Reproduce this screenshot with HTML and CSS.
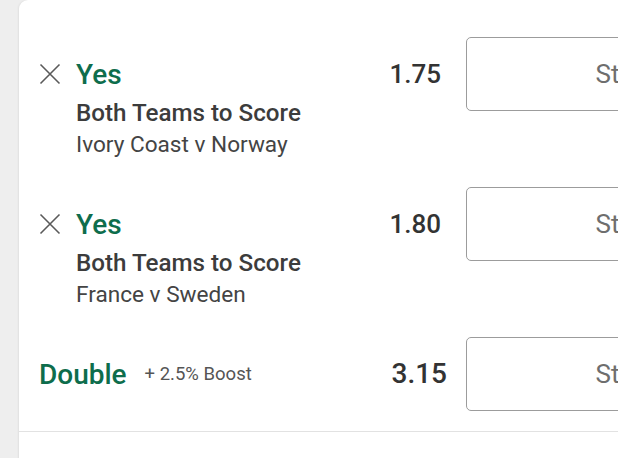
FILE: index.html
```html
<!DOCTYPE html>
<html lang="en">
<head>
  <meta charset="UTF-8" />
  <meta name="viewport" content="width=device-width, initial-scale=1.0"/>
  <title>Bet Slip</title>
  <link rel="stylesheet" href="styles.css">
</head>

<body>
  <div class="slip">
    <div class="leg">
      <div class="selection">
        <div class="selection-head">
          <button class="remove" aria-label="Remove">
            <svg width="22" height="22" viewBox="0 0 22 22"><path d="M1.5 1.5 L20.5 20.5 M20.5 1.5 L1.5 20.5" stroke="#5a5a5a" stroke-width="1.6" fill="none"/></svg>
          </button>
          <span class="pick">Yes</span>
        </div>
        <div class="market">Both Teams to Score</div>
        <div class="event">Ivory Coast v Norway</div>
      </div>
      <div class="odds">1.75</div>
      <input class="stake" type="text" placeholder="Stake">
    </div>

    <div class="leg">
      <div class="selection">
        <div class="selection-head">
          <button class="remove" aria-label="Remove">
            <svg width="22" height="22" viewBox="0 0 22 22"><path d="M1.5 1.5 L20.5 20.5 M20.5 1.5 L1.5 20.5" stroke="#5a5a5a" stroke-width="1.6" fill="none"/></svg>
          </button>
          <span class="pick">Yes</span>
        </div>
        <div class="market">Both Teams to Score</div>
        <div class="event">France v Sweden</div>
      </div>
      <div class="odds">1.80</div>
      <input class="stake" type="text" placeholder="Stake">
    </div>

    <div class="multiple">
      <div class="multiple-name">
        <span class="pick">Double</span>
        <span class="boost">+ 2.5% Boost</span>
      </div>
      <div class="odds odds-multiple">3.15</div>
      <input class="stake" type="text" placeholder="Stake">
    </div>
  </div>
</body>
</html>
```

FILE: styles.css
```css
body {
  margin: 0;
  background: #eeeeee;
  font-family: 'Roboto', sans-serif;
  overflow: hidden;
  height: 458px;
}

/* the white slip card, running off the right edge */
.slip {
  margin-left: 19px;
  width: 800px;
  height: 470px;
  background: white;
  border-top-left-radius: 9px;
  box-shadow: -1px 0 2px rgba(0, 0, 0, 0.06);
  padding-top: 37px;
  box-sizing: border-box;
}

/* single selections */
.leg {
  display: flex;
  align-items: flex-start;
  height: 150px;
  padding-left: 20px;
}

.selection {
  width: 300px;
  padding-top: 21px;
}

.selection-head {
  display: flex;
  align-items: center;
  height: 32px;
}

.remove {
  background: none;
  border: none;
  padding: 0;
  margin-right: 15px;
  width: 22px;
  height: 22px;
  display: flex;
}

.pick {
  color: #0e6d4c;
  font-weight: 500;
  font-size: 28px;
}

.market {
  margin-top: 5px;
  padding-left: 37px;
  line-height: 36px;
  font-size: 24.2px;
  font-weight: 500;
  color: #3c3c3c;
}

.event {
  padding-left: 37px;
  line-height: 28px;
  font-size: 22.6px;
  color: #444;
}

.odds {
  width: 102px;
  text-align: right;
  line-height: 74px;
  font-size: 26px;
  font-weight: 500;
  color: #333;
  margin-right: 25px;
}

.stake {
  width: 324px;
  height: 74px;
  box-sizing: border-box;
  border: 1px solid #9c9c9c;
  border-radius: 5px;
  font-family: 'Roboto', sans-serif;
  font-size: 26px;
  text-align: center;
  color: #333;
  background: white;
  outline: none;
}

.stake::placeholder {
  color: #6e6e6e;
}

/* the multiple (double) row */
.multiple {
  display: flex;
  align-items: center;
  padding: 0 0 20px 20px;
  border-bottom: 1px solid #e2e2e2;
}

.multiple-name {
  width: 300px;
  display: flex;
  align-items: center;
  gap: 18px;
}

.multiple-name .pick {
  font-size: 28px;
}

.boost {
  font-size: 18.5px;
  color: #555;
}

.odds-multiple {
  width: 108px;
  font-size: 28px;
  margin-right: 19px;
}
```
